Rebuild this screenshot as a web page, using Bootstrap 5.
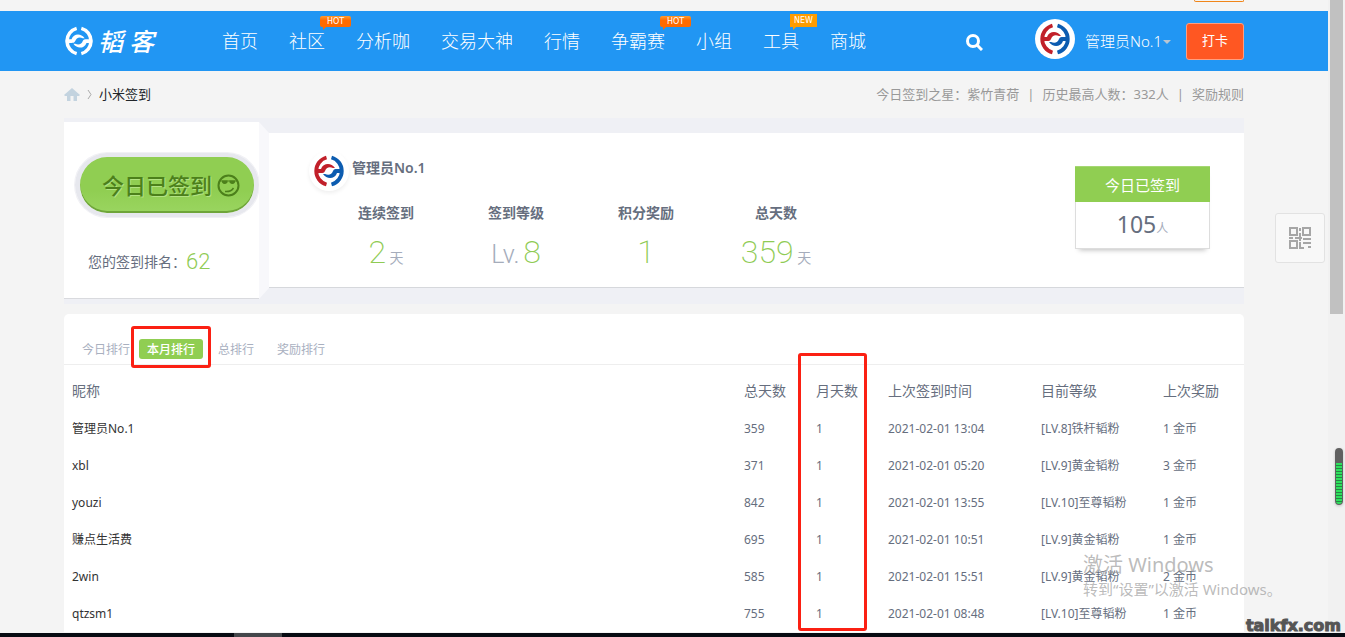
<!DOCTYPE html>
<html lang="zh-CN">
<head>
<meta charset="utf-8">
<meta name="viewport" content="width=device-width, initial-scale=1">
<title>小米签到</title>
<link href="https://cdn.jsdelivr.net/npm/bootstrap@5.3.0/dist/css/bootstrap.min.css" rel="stylesheet">
<style>
body{background:#f4f4f4;font-family:"Noto Sans","Noto Sans CJK SC",sans-serif;font-size:12px;color:#666e7e;height:100vh;overflow:hidden}
a{text-decoration:none;color:inherit}
.wrap{max-width:1200px;padding-right:20px;margin:0 auto}
.viewport-row{min-height:0}
.topstrip{height:11px}
.ghost{width:50px;height:2px;border:1px solid #f08519;border-top:0;border-radius:0 0 3px 3px}
.mainbar{background:#2196f3;height:60px;color:#fff}
.brand-text{width:60px;font-size:25px;font-weight:500;font-style:italic;line-height:32px;gap:6px}
.menu{gap:31px;margin-left:64px;font-size:18px;font-weight:300;line-height:28px}
.tag{position:absolute;top:-11px;right:-26px;width:31px;height:11px;font:400 8px/11px "DejaVu Sans",sans-serif;text-align:center;background:linear-gradient(#ff9a2e,#ff6a00 40%);border-radius:2px;color:#fff}
.tag::after{content:"";position:absolute;left:3px;top:11px;border:solid transparent;border-width:0 3px 3px 0;border-top:3px solid #ff6a00}
.tag-new{top:-13px;right:-18px;width:27px;height:13px;line-height:13px;border-radius:0;background:#ff9c00}
.tag-new::after{top:13px;border-top-color:#ff9c00}
.search{margin-right:52px;padding:2px 0 0;border:0;background:none;color:#fff;line-height:1}
.avatar{width:40px;height:40px;border-radius:50%;background:#fff}
.mainbar .avatar{margin-bottom:4px}
.soft{box-shadow:0 2px 4px #0001}
.user{font-size:15px;font-weight:300;margin-left:10px;margin-right:15px;line-height:24px}
.user::after{content:"";display:inline-block;border:4px solid transparent;border-top-color:#b9c6d2;border-bottom:0;vertical-align:3px;margin-left:1px}
.punch{width:58px;height:37px;border:1px solid #ff9e80;border-radius:3px;background:#ff5722;color:#fff;font-size:13px;padding:0}
.crumbs{height:47px;font-size:13px;color:#999}
.crumb-sep{margin:0 7px}
.sign{background:#eff0f5;padding:4px 0 5px}
.sign-left{width:195px;height:177px;background:#fff;border-bottom:1px solid #d9dade;padding:31px 0 0 11px}
.fold{width:10px;height:177px;background:#f8f8fb;clip-path:polygon(0 0,100% 11px,100% 166px,0 100%)}
.sign-right{height:155px;margin-top:11px;background:#fff;border-bottom:1px solid #d6d8dc;padding-left:40px}
.done{width:184px;height:64px;border:solid #e7e8ee;border-width:4px 5px;border-radius:32px;background:linear-gradient(#90ce52 60%,#9ad560);box-shadow:inset 0 -2px 0 #6fa53a,0 0 0 1px #f1f1f5;color:#4c801b;font-size:22px;font-weight:500;text-shadow:1px 1px 0 #b3e283;padding:0 0 0 8px;gap:5px}
.rank{font-size:14px;margin:29px 0 0 13px;line-height:32px}
.num{font-family:"Roboto",sans-serif;font-weight:300;color:#8fcb54}
.rank .num{font-size:22px}
.profile{padding-top:18px;height:60px;font-size:14px;font-weight:600}
.profile-name{padding:6px 0 0 3px}
.stat{width:130px;text-align:center}
.stat h2{font-size:14px;font-weight:600;line-height:20px;margin:10px 0 0}
.stat p{margin:9px 0 0;line-height:40px;color:#a5acbb;font-size:14px}
.stat .num{font-size:32px;font-weight:200}
.stat .lv{font-family:"Roboto",sans-serif;font-weight:300;font-size:25px}
.stats{margin-left:12px}
.today{width:135px;height:83px;margin:33px 34px 0 0;border:1px solid #ddd;border-top:0;text-align:center;background:#fff;box-shadow:0 5px 5px -4px #0004}
.today-head{margin:0 -1px;background:#90ce52;border-top:1px solid #a5d773;color:#fff;font-size:15px;line-height:36px;height:36px}
.today-body{font-size:23px;line-height:44px}
.today-body span{font-size:12px;color:#a5acbb}
.board{background:#fff;border-radius:5px 5px 0 0;margin-top:10px;position:relative}
.tabs{height:51px;padding:25px 10px 0;border-bottom:1px solid #eee;gap:7px;color:#a9b0bf}
.tabs a{padding:0 8px;line-height:21px;height:20px}
.tabs .active{background:#90ce52;color:#fff;border-radius:3px;font-weight:500;margin-left:-6px;position:relative}
.tabs .active::after{content:"";position:absolute;inset:-13px -8px -9px;border:3px solid #fb2013;border-radius:3px}
.ranks{width:100%;margin-top:7px;table-layout:fixed;line-height:20px}
.ranks th{font-size:14px;font-weight:400;height:38px;padding:0 8px;white-space:nowrap}
.ranks td{height:37px;padding:0 8px;white-space:nowrap}
.ranks td:first-child{color:#333}
.c-day{width:72px}.c-time{width:153px}.c-level{width:122px}.c-prize{width:89px}
.column-mark{position:absolute;top:39px;right:377px;width:69px;height:278px;border:3px solid #fb2013;border-radius:3px}
.qr{position:absolute;right:20px;top:213px;width:50px;height:50px;border:1px solid #e2e2e2;border-radius:3px;background:#f8f8f8;padding:0;color:#a6a6a6}
.track{width:17px;background:#f1f1f1;padding:0 2px}
.thumb{height:314px;background:#c1c1c1}
.meter{position:absolute;right:2px;top:448px;width:8px;height:57px;border-radius:4px;border:1px solid #606060;border-top-width:15px;background:repeating-linear-gradient(#2ee05d 0 2px,#278546 2px 3px);box-shadow:0 1px 3px #0003}
.activate{position:absolute;left:1083px;top:552px;color:#999a;white-space:nowrap;line-height:24px}
.activate strong{font-size:20px;font-weight:400;display:block;line-height:25px}
.activate span{font-size:15px}
.site{position:absolute;right:4px;bottom:2px;font:700 16px/18px "DejaVu Sans",sans-serif;color:#555;-webkit-text-stroke:1px #555}
.taskbar{height:4px;background:#070b12;padding-left:234px}
.taskbar i{display:block;width:48px;height:4px;background:#44474b}
</style>
</head>
<body class="d-flex flex-column position-relative">
<svg width="0" height="0" class="position-absolute" aria-hidden="true">
  <defs>
    <g id="left-half"><path d="M17.500 6.500A14 14 0 0 0 17.500 33.500" fill="none" stroke-width="3.800"/><path d="M6 18H12C14 12 22 11 26 17H24C20 15 17 17 16 20C15 22 14 22 12 22H6Z" stroke="none"/></g>
    <g id="right-half"><use href="#left-half" transform="rotate(180 20 20)"/></g>
  </defs>
</svg>
<div class="viewport-row d-flex flex-grow-1 overflow-hidden">
  <div class="flex-grow-1">
    <div class="topstrip"><div class="wrap d-flex justify-content-end"><div class="ghost"></div></div></div>
    <header class="mainbar">
      <div class="wrap d-flex align-items-center h-100">
        <a href="#" class="d-flex align-items-center">
          <svg width="30" height="30" viewBox="4 4 32 32" fill="#fff" stroke="#fff"><use href="#left-half"/><use href="#right-half"/></svg>
          <span class="brand-text d-flex ms-1"><span>韬</span><span>客</span></span>
        </a>
        <nav class="menu d-flex">
          <a href="#">首页</a>
          <a href="#" class="position-relative">社区<span class="tag">HOT</span></a>
          <a href="#">分析咖</a>
          <a href="#">交易大神</a>
          <a href="#">行情</a>
          <a href="#" class="position-relative">争霸赛<span class="tag">HOT</span></a>
          <a href="#">小组</a>
          <a href="#" class="position-relative">工具<span class="tag tag-new">NEW</span></a>
          <a href="#">商城</a>
        </nav>
        <button class="search ms-auto" type="button" aria-label="搜索"><svg width="17" height="17" viewBox="0 0 17 17" fill="none" stroke="currentColor" stroke-width="3"><circle cx="7" cy="7" r="5.500"/><path d="M11 11l5 5"/></svg></button>
        <svg class="avatar" viewBox="0 0 40 40"><use href="#left-half" fill="#c1202a" stroke="#c1202a"/><use href="#right-half" fill="#0c5cb0" stroke="#0c5cb0"/></svg>
        <a href="#" class="user">管理员No.1</a>
        <button class="punch" type="button">打卡</button>
      </div>
    </header>
    <main class="wrap">
      <div class="crumbs d-flex align-items-center">
        <svg width="16" height="13" viewBox="0 0 16 13" fill="#c3d3df"><path d="M8 0L16 7L15 8H13V13H9.500V8H6.500V13H3V8H1L0 7Z"/></svg>
        <svg width="5" height="11" viewBox="0 0 5 11" class="crumb-sep" fill="none" stroke="#aaa"><path d="M1 1L4 5.500L1 10"/></svg>
        <span class="text-dark">小米签到</span>
        <div class="ms-auto d-flex gap-2"><span>今日签到之星：紫竹青荷</span><span>|</span><span>历史最高人数：332人</span><span>|</span><a href="#">奖励规则</a></div>
      </div>
      <section class="sign d-flex">
        <div class="sign-left flex-shrink-0">
          <button class="done d-flex align-items-center justify-content-center" type="button">今日已签到
            <svg width="23" height="23" viewBox="0 0 23 23" fill="none" stroke="#4c801b" stroke-width="2"><circle cx="11.500" cy="11.500" r="10"/><path d="M2 7H21" stroke-width="1"/><path d="M5 6.500h5.500v2q-3 3-5.500 0zM12.500 6.500h5.500v2q-2.500 3-5.500 0z" fill="#4c801b" stroke="none"/><path d="M8 17.500Q14 18 16.500 14" stroke-width="1.500"/></svg>
          </button>
          <div class="rank d-flex align-items-center"><span>您的签到排名：</span><span class="num">62</span></div>
        </div>
        <div class="fold flex-shrink-0"></div>
        <div class="sign-right flex-grow-1 d-flex justify-content-between">
          <div>
            <div class="profile d-flex"><svg class="avatar soft" viewBox="0 0 40 40"><use href="#left-half" fill="#c1202a" stroke="#c1202a"/><use href="#right-half" fill="#0c5cb0" stroke="#0c5cb0"/></svg><span class="profile-name">管理员No.1</span></div>
            <div class="stats d-flex">
              <div class="stat"><h2>连续签到</h2><p><span class="num">2</span> 天</p></div>
              <div class="stat"><h2>签到等级</h2><p><span class="lv">Lv.</span> <span class="num">8</span></p></div>
              <div class="stat"><h2>积分奖励</h2><p><span class="num">1</span></p></div>
              <div class="stat"><h2>总天数</h2><p><span class="num">359</span> 天</p></div>
            </div>
          </div>
          <div class="today"><div class="today-head">今日已签到</div><div class="today-body">105<span>人</span></div></div>
        </div>
      </section>
      <section class="board">
        <nav class="tabs d-flex"><a href="#">今日排行</a><a href="#" class="active">本月排行</a><a href="#">总排行</a><a href="#">奖励排行</a></nav>
        <table class="ranks">
          <thead><tr><th>昵称</th><th class="c-day">总天数</th><th class="c-day">月天数</th><th class="c-time">上次签到时间</th><th class="c-level">目前等级</th><th class="c-prize">上次奖励</th></tr></thead>
          <tbody>
            <tr><td>管理员No.1</td><td>359</td><td>1</td><td>2021-02-01 13:04</td><td>[LV.8]铁杆韬粉</td><td>1 金币</td></tr>
            <tr><td>xbl</td><td>371</td><td>1</td><td>2021-02-01 05:20</td><td>[LV.9]黄金韬粉</td><td>3 金币</td></tr>
            <tr><td>youzi</td><td>842</td><td>1</td><td>2021-02-01 13:55</td><td>[LV.10]至尊韬粉</td><td>1 金币</td></tr>
            <tr><td>赚点生活费</td><td>695</td><td>1</td><td>2021-02-01 10:51</td><td>[LV.9]黄金韬粉</td><td>1 金币</td></tr>
            <tr><td>2win</td><td>585</td><td>1</td><td>2021-02-01 15:51</td><td>[LV.9]黄金韬粉</td><td>2 金币</td></tr>
            <tr><td>qtzsm1</td><td>755</td><td>1</td><td>2021-02-01 08:48</td><td>[LV.10]至尊韬粉</td><td>1 金币</td></tr>
          </tbody>
        </table>
        <div class="column-mark"></div>
      </section>
    </main>
  </div>
  <div class="track flex-shrink-0"><div class="thumb"></div></div>
</div>
<button class="qr" type="button" aria-label="二维码"><svg width="22" height="22" viewBox="0 0 22 22" fill="none" stroke="currentColor" stroke-width="2"><path d="M1 1h7v7H1zM14 1h7v7h-7zM1 14h7v7H1zM11 1v3M11 6v8M0 11h4M6 11h7M14 12h8M14 16h8M11 15v3M10 21h5M11 18v4M19 20h3"/></svg></button>
<div class="meter"></div>
<div class="activate"><strong>激活 Windows</strong><span>转到“设置”以激活 Windows。</span></div>
<div class="site">talkfx.com</div>
<footer class="taskbar flex-shrink-0"><i></i></footer>
<script src="https://cdn.jsdelivr.net/npm/bootstrap@5.3.0/dist/js/bootstrap.bundle.min.js"></script>
</body>
</html>
